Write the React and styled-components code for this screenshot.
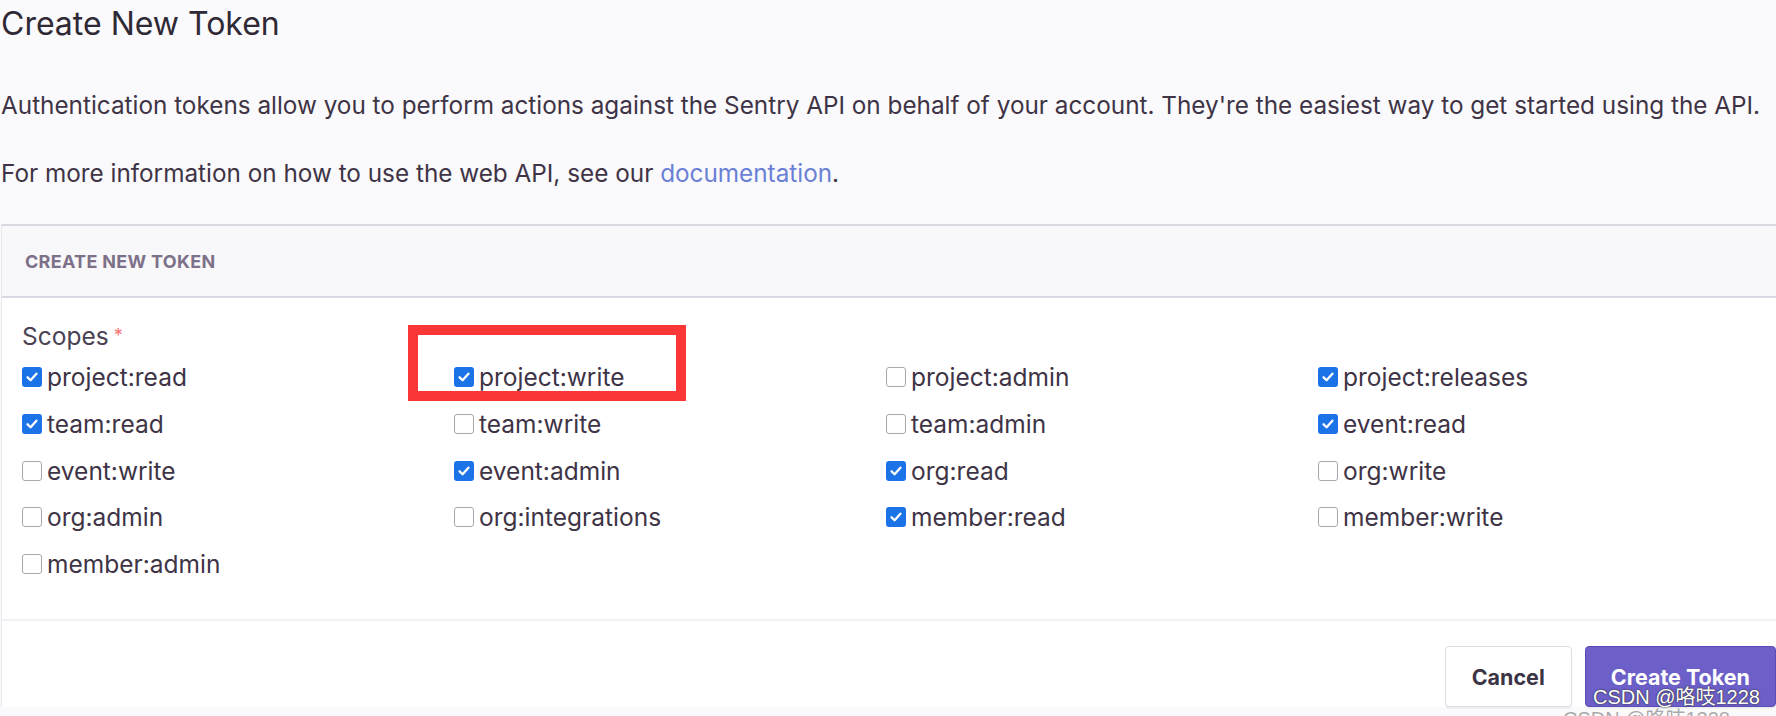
import React from "react";
import styled, { createGlobalStyle } from "styled-components";

const GlobalStyle = createGlobalStyle`
  html, body {
    margin: 0;
    padding: 0;
    background: #faf9fb;
    overflow: hidden;
  }
  body {
    font-family: "Inter", "Noto Sans", sans-serif;
    color: #3e3446;
  }
`;

const Page = styled.div`
  width: 1776px;
  height: 716px;
  position: relative;
  overflow: hidden;
  padding-left: 1px;
  box-sizing: border-box;
`;

const Title = styled.h1`
  margin: 0;
  padding-top: 4px;
  font-size: 32px;
  font-weight: 400;
  line-height: 40px;
  color: #2f2936;
`;

const Text = styled.p`
  margin: 0;
  font-size: 24.3px;
  line-height: 32px;
  color: #3e3446;
  white-space: nowrap;
  margin-top: ${(p) => p.$top}px;
`;

const Link = styled.a`
  color: #6a7fd6;
  text-decoration: none;
`;

const Panel = styled.section`
  margin-top: 35px;
  border-top: 2px solid #dcd7e2;
  border-left: 1px solid #ebe8ef;
  background: #fff;
  width: 1800px;
`;

const PanelHeader = styled.div`
  height: 72px;
  box-sizing: border-box;
  padding-left: 23px;
  display: flex;
  align-items: center;
  background: #f8f7fa;
  border-bottom: 2px solid #dcd7e2;
  font-size: 18px;
  font-weight: 700;
  letter-spacing: 0.3px;
  text-transform: uppercase;
  color: #7d7189;
`;

const PanelBody = styled.div`
  padding: 25px 0 0 20px;
  height: 323px;
  box-sizing: border-box;
  border-bottom: 2px solid #f1f0f3;
`;

const Label = styled.div`
  font-size: 24.5px;
  line-height: 26px;
  color: #4a4153;
  margin-bottom: 5px;
`;

const Required = styled.span`
  color: #f77272;
  font-size: 18px;
  vertical-align: top;
  margin-left: 5px;
`;

const ScopeGrid = styled.div`
  display: grid;
  grid-template-columns: repeat(4, 432px);
  grid-auto-rows: 46.7px;
`;

const Scope = styled.label`
  position: relative;
  display: flex;
  align-items: center;
  gap: 5px;
  font-size: 24.5px;
  color: #3e3446;
`;

const Box = styled.span`
  width: 20px;
  height: 20px;
  flex: none;
  box-sizing: border-box;
  border-radius: 3px;
  display: flex;
  align-items: center;
  justify-content: center;
  background: ${(p) => (p.$on ? "#1c73e8" : "#fff")};
  border: ${(p) => (p.$on ? "none" : "1.5px solid #a8a8a8")};
`;

const Highlight = styled.span`
  position: absolute;
  left: -46px;
  top: -29px;
  width: 278px;
  height: 76px;
  box-sizing: border-box;
  border: 10px solid #fb3636;
  pointer-events: none;
`;

const Footer = styled.div`
  display: flex;
  justify-content: flex-end;
  gap: 13px;
  padding: 25px 2px 0 0;
  width: 1776px;
  box-sizing: border-box;
`;

const Button = styled.button`
  height: 61px;
  padding: 0 ${(p) => (p.$primary ? 25 : 26)}px;
  border-radius: 4px;
  font-family: "Inter", "Noto Sans", sans-serif;
  font-size: 21.5px;
  font-weight: 700;
  cursor: pointer;
  background: ${(p) => (p.$primary ? "#6c5fc7" : "#fff")};
  color: ${(p) => (p.$primary ? "#fff" : "#3b3445")};
  border: 1px solid ${(p) => (p.$primary ? "#5b4db9" : "#e0dbe5")};
  box-shadow: 0 2px 1px rgba(0, 0, 0, 0.05);
`;

const Watermark = styled.div`
  position: absolute;
  right: 16px;
  bottom: ${(p) => p.$bottom}px;
  font-family: "Liberation Sans", "Noto Sans CJK SC", sans-serif;
  font-size: 20px;
  color: ${(p) => (p.$ghost ? "rgba(90, 90, 90, 0.5)" : "#fff")};
  text-shadow: ${(p) => (p.$ghost ? "none" : "0 0 2px #333, 0 0 1px #333")};
  margin-right: ${(p) => (p.$ghost ? 30 : 0)}px;
  pointer-events: none;
`;

const Check = () => (
  <svg width="14" height="14" viewBox="0 0 12 12">
    <path d="M2.2 6.3 4.8 8.8 9.8 3.2" fill="none" stroke="#fff" strokeWidth="2" strokeLinecap="round" strokeLinejoin="round" />
  </svg>
);

const scopes = [
  ["project:read", true],
  ["project:write", true, true],
  ["project:admin", false],
  ["project:releases", true],
  ["team:read", true],
  ["team:write", false],
  ["team:admin", false],
  ["event:read", true],
  ["event:write", false],
  ["event:admin", true],
  ["org:read", true],
  ["org:write", false],
  ["org:admin", false],
  ["org:integrations", false],
  ["member:read", true],
  ["member:write", false],
  ["member:admin", false],
];

export default function App() {
  return (
    <>
      <GlobalStyle />
      <Page>
        <Title>Create New Token</Title>
        <Text $top={45}>
          Authentication tokens allow you to perform actions against the Sentry API on behalf of your account. They're the easiest way to get started using the API.
        </Text>
        <Text $top={36}>
          For more information on how to use the web API, see our <Link href="#">documentation</Link>.
        </Text>
        <Panel>
          <PanelHeader>Create New Token</PanelHeader>
          <PanelBody>
            <Label>
              Scopes<Required>*</Required>
            </Label>
            <ScopeGrid>
              {scopes.map(([name, on, marked]) => (
                <Scope key={name}>
                  <Box $on={on}>{on && <Check />}</Box>
                  {name}
                  {marked && <Highlight />}
                </Scope>
              ))}
            </ScopeGrid>
          </PanelBody>
          <Footer>
            <Button>Cancel</Button>
            <Button $primary>Create Token</Button>
          </Footer>
        </Panel>
        <Watermark $bottom={6}>CSDN @咯吱1228</Watermark>
        <Watermark $ghost $bottom={-16}>CSDN @咯吱1228</Watermark>
      </Page>
    </>
  );
}
